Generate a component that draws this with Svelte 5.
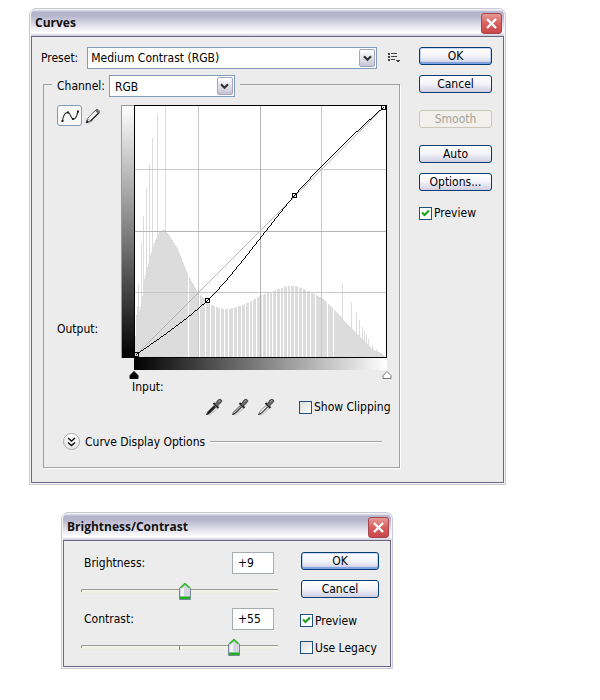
<script>
    let preset = "Medium Contrast (RGB)";
    let channel = "RGB";
    let curvePreview = true;
    let showClipping = false;
    let brightness = 9;
    let contrast = 55;
    let preview = true;
    let legacy = false;

    // outline of the histogram, x and top y in plot units
    const outline = [
        [1, 243], [3, 200], [5, 208], [8, 197], [10, 177], [16, 153], [21, 137], [26, 127],
        [30, 125], [34, 129], [43, 142], [53, 167], [58, 177], [64, 188], [76, 200], [86, 204],
        [94, 205], [103, 203], [116, 198], [126, 192], [139, 187], [153, 182], [163, 182],
        [176, 187], [189, 194], [203, 207], [216, 222], [229, 235], [239, 245], [248, 249], [252, 252],
    ];
    const spikes = [
        [4, 179], [7, 139], [9, 111], [12, 83], [15, 59], [18, 33], [23, 9], [31, 0],
        [209, 179], [218, 198], [223, 209], [226, 216], [229, 223], [231, 227], [233, 231], [235, 235],
        [239, 241], [243, 245],
    ];
    const gaps = [
        54, 65, 71, 76, 81, 86, 90, 94, 99, 103, 107, 111, 115, 118, 122, 126, 129, 133, 136, 139,
        143, 147, 150, 154, 157, 161, 165, 169, 173, 177, 182, 188, 194, 200,
    ];
    const points = [[2, 250], [73, 196], [161, 90], [250, 2]];
    const droppers = [
        { name: "black point", fill: "#111" },
        { name: "gray point", fill: "#aaa" },
        { name: "white point", fill: "#fff" },
    ];

    const shape = "M1 253L" + outline.map((p) => p.join(" ")).join("L") + "L252 253Z";

    function signed(n) {
        return n > 0 ? "+" + n : String(n);
    }

    function setBrightness(event) {
        brightness = Number(event.target.value) || 0;
    }

    function setContrast(event) {
        contrast = Number(event.target.value) || 0;
    }
</script>

<main>
    <section class="window curves">
        <header>
            <h2>Curves</h2>
            <button type="button" class="close" aria-label="Close Curves">
                <svg width="13" height="13" viewBox="0 0 13 13"><path d="M2 2l9 9M11 2l-9 9" stroke="#fff" stroke-width="2.4" /></svg>
            </button>
        </header>
        <div class="body">
            <div class="left">
                <div class="preset">
                    <label for="preset">Preset:</label>
                    <div class="combo wide">
                        <select id="preset" bind:value={preset}>
                            <option>Medium Contrast (RGB)</option>
                        </select>
                        <span class="arrow"><svg width="9" height="7" viewBox="0 0 9 7"><path d="M1 1.2l3.5 3.5L8 1.2" fill="none" stroke="#333" stroke-width="2.2" /></svg></span>
                    </div>
                    <button type="button" class="plain" aria-label="Preset options">
                        <svg width="12" height="12" viewBox="0 0 12 12" shape-rendering="crispEdges">
                            <path d="M0 1h2v2H0zM0 4h2v2H0zM0 7h2v2H0zM3 1h6v1H3zM3 4h6v1H3zM3 7h4v1H3zM8 8h4v1H8zM9 9h2v1H9z" fill="#444" />
                        </svg>
                    </button>
                </div>

                <fieldset>
                    <legend>
                        <label for="channel">Channel:</label>
                        <span class="combo channel">
                            <select id="channel" bind:value={channel}>
                                <option>RGB</option>
                                <option>Red</option>
                                <option>Green</option>
                                <option>Blue</option>
                            </select>
                            <span class="arrow"><svg width="9" height="7" viewBox="0 0 9 7"><path d="M1 1.2l3.5 3.5L8 1.2" fill="none" stroke="#333" stroke-width="2.2" /></svg></span>
                        </span>
                    </legend>

                    <div class="graph">
                        <div class="side">
                            <div class="tools">
                                <button type="button" class="tool" aria-label="Edit points">
                                    <svg width="20" height="16" viewBox="0 0 20 16">
                                        <path d="M2.500 13C3 8 5 4 8 4.500S10.500 11 13.500 11 17 7 18 3" fill="none" stroke="#333" stroke-width="1.200" />
                                        <path d="M1.500 12h2v2h-2zM7 3.500h2v2H7zM12 10h2v2h-2zM17 2.500h2v2h-2z" fill="#222" />
                                    </svg>
                                </button>
                                <button type="button" class="plain" aria-label="Draw curve">
                                    <svg width="16" height="16" viewBox="0 0 16 16">
                                        <path d="M3 15.500L8 12.500" stroke="#ccc" stroke-width="1.500" />
                                        <path d="M1 15l1.500-4.500L11 1.800q1-1 2.500.2T14.300 4.500L5.500 13z" fill="#f4f4f4" stroke="#555" stroke-width=".9" />
                                        <path d="M2.500 10.500l3 2.500" fill="none" stroke="#777" stroke-width=".8" />
                                        <path d="M5.500 13L14.300 4.500" stroke="#222" stroke-width="1.200" />
                                        <path d="M1 15l1-3 2 2z" fill="#111" />
                                        <path d="M11 1.800q2-1.300 3.300 2.700L13 5.500l-3-2.700z" fill="#666" />
                                    </svg>
                                </button>
                            </div>
                            <span>Output:</span>
                        </div>
                        <div class="ramp-v"></div>
                        <div class="plot">
                            <svg viewBox="0 0 254 254" shape-rendering="crispEdges" role="img" aria-label="Curve">
                                <rect width="254" height="254" fill="#fff" />
                                <path d={shape} fill="#dcdcdc" />
                                {#each spikes as [x, y]}
                                    <rect {x} {y} width="1" height={253 - y} fill="#dcdcdc" />
                                {/each}
                                {#each gaps as x}
                                    <rect {x} y="160" width="1" height="93" fill="#fff" />
                                {/each}
                                <path d="M64.500 0V253M188.500 0V253M0 64.500H253M0 188.500H253" stroke="#c8c8c8" />
                                <path d="M126.500 0V253M0 126.500H253" stroke="#b4b4b4" />
                                <path d="M2 251L251 2" stroke="#b4b4b4" />
                                <path d="M2.500 250.500C30 231 50 218 73.500 196.500S140 115 161.500 90.500 222 27 250.500 2.500" fill="none" stroke="#000" />
                                {#each points as [x, y]}
                                    <rect x={x - 1.5} y={y - 1.5} width="4" height="4" fill="none" stroke="#000" />
                                {/each}
                                <rect x="0.5" y="0.5" width="253" height="253" fill="none" stroke="#000" />
                            </svg>
                            <div class="ramp-h"></div>
                            <div class="markers">
                                <svg width="10" height="8" viewBox="0 0 10 8"><path d="M5 .5L9 4.500V7.500H1V4.500z" fill="#000" stroke="#000" /></svg>
                                <svg width="10" height="8" viewBox="0 0 10 8"><path d="M5 .5L9 4.500V7.500H1V4.500z" fill="#fff" stroke="#777" /></svg>
                            </div>
                            <span class="input-label">Input:</span>
                        </div>
                    </div>

                    <div class="picks">
                        {#each droppers as d}
                            <button type="button" class="plain" aria-label={"Set " + d.name}>
                                <svg width="18" height="18" viewBox="0 0 18 18">
                                    <path d="M4 17L12 10.500" stroke="#ccc" stroke-width="2" />
                                    <path d="M1.500 16.500L2.500 14 9 7.500l1.500 1.500L4 15.500z" fill={d.fill} stroke="#555" stroke-width=".7" />
                                    <path d="M1.500 16.500L4 15.500 10.500 9" fill="none" stroke="#111" />
                                    <path d="M8.500 5l5 5" stroke="#222" stroke-width="2" />
                                    <path d="M10 6.500L13 2q2.500-1.500 3.500 0T15.500 5L12 8.500z" fill="#666" stroke="#333" stroke-width=".8" />
                                    <path d="M13.500 3.500l1.500-1" stroke="#bbb" />
                                </svg>
                            </button>
                        {/each}
                        <label class="check clip"><input type="checkbox" bind:checked={showClipping} />Show Clipping</label>
                    </div>

                    <div class="more">
                        <button type="button" class="round" aria-label="Expand Curve Display Options">
                            <svg width="9" height="10" viewBox="0 0 9 10"><path d="M1 1l3.500 3L8 1M1 5.500l3.500 3L8 5.500" fill="none" stroke="#111" stroke-width="1.500" /></svg>
                        </button>
                        <span>Curve Display Options</span>
                        <hr />
                    </div>
                </fieldset>
            </div>

            <div class="actions">
                <button type="button" class="btn default">OK</button>
                <button type="button" class="btn">Cancel</button>
                <button type="button" class="btn spaced" disabled>Smooth</button>
                <button type="button" class="btn spaced">Auto</button>
                <button type="button" class="btn">Options...</button>
                <label class="check"><input type="checkbox" bind:checked={curvePreview} />Preview</label>
            </div>
        </div>
    </section>

    <section class="window brightness">
        <header>
            <h2>Brightness/Contrast</h2>
            <button type="button" class="close" aria-label="Close Brightness/Contrast">
                <svg width="13" height="13" viewBox="0 0 13 13"><path d="M2 2l9 9M11 2l-9 9" stroke="#fff" stroke-width="2.4" /></svg>
            </button>
        </header>
        <div class="body">
            <div class="sliders">
                <div class="field">
                    <label for="brightness">Brightness:</label>
                    <input id="brightness" type="text" value={signed(brightness)} on:change={setBrightness} />
                </div>
                <input type="range" aria-label="Brightness" min="-150" max="150" bind:value={brightness} />
                <div class="field">
                    <label for="contrast">Contrast:</label>
                    <input id="contrast" type="text" value={signed(contrast)} on:change={setContrast} />
                </div>
                <input type="range" class="ticked" aria-label="Contrast" min="-100" max="100" bind:value={contrast} />
            </div>
            <div class="actions">
                <button type="button" class="btn default">OK</button>
                <button type="button" class="btn">Cancel</button>
                <div class="checks">
                    <label class="check"><input type="checkbox" bind:checked={preview} />Preview</label>
                    <label class="check"><input type="checkbox" bind:checked={legacy} />Use Legacy</label>
                </div>
            </div>
        </div>
    </section>
</main>

<style>
    :global(body) {
        background: #fff;
    }
    main {
        padding: 8px 94px 8px 29px;
        font: 12px/16px "DejaVu Sans Condensed", "Noto Sans", sans-serif;
        color: #000;
    }
    main * {
        box-sizing: border-box;
    }
    button, input, select {
        font: inherit;
        color: inherit;
        margin: 0;
    }
    svg {
        display: block;
    }

    .window {
        border: 1px solid #c9c8d6;
        border-radius: 7px 7px 0 0;
        background: #f4f3fa;
        padding: 0 1px 1px;
    }
    .brightness {
        margin: 27px 113px 0 32px;
    }
    header {
        display: flex;
        align-items: center;
        justify-content: space-between;
        height: 27px;
        padding: 1px 2px 0 4px;
        border-radius: 6px 6px 0 0;
        background: linear-gradient(#fff 0, #b4b3cc 3px, #b6b5cd 7px, #d6d5e3 14px, #f4f4f8 21px, #fff 24px, #c6c5d4 27px);
    }
    h2 {
        margin: 0;
        font: bold 12px/16px "Open Sans", "Noto Sans", sans-serif;
        color: #111;
    }
    .close {
        display: grid;
        place-items: center;
        width: 21px;
        height: 21px;
        padding: 0;
        border: 1px solid #a8454c;
        border-radius: 3px;
        background: linear-gradient(#e59a96, #d9605c 50%, #c9474a);
    }
    .body {
        display: flex;
        border: 1px solid #6a6785;
        background: #ececec;
    }
    .plain {
        padding: 0;
        border: 0;
        background: none;
    }

    .curves .body {
        gap: 19px;
        padding: 10px 11px 14px 9px;
    }
    .left {
        flex: 1;
        min-width: 0;
    }
    .preset {
        display: flex;
        align-items: center;
        gap: 9px;
    }
    .preset .plain {
        margin-left: 2px;
    }
    .combo {
        position: relative;
        display: flex;
        height: 22px;
    }
    .wide {
        flex: 1;
    }
    .channel {
        width: 126px;
    }
    select {
        width: 100%;
        height: 22px;
        padding: 0 20px 0 3px;
        border: 1px solid #7f9db9;
        border-radius: 0;
        background: #fff;
        appearance: none;
    }
    .channel select {
        padding-left: 5px;
    }
    .arrow {
        position: absolute;
        top: 2px;
        right: 2px;
        display: grid;
        place-items: center;
        width: 16px;
        height: 18px;
        border: 1px solid #a5a5bd;
        border-radius: 2px;
        background: linear-gradient(#fff, #dcdce8 60%, #c3c3d6);
        pointer-events: none;
    }

    fieldset {
        min-width: 0;
        margin: 6px 0 0 2px;
        padding: 12px 12px 17px 13px;
        border: 1px solid #a0a0a4;
        box-shadow: 1px 1px 0 #fff;
    }
    legend {
        display: flex;
        align-items: flex-start;
        gap: 4px;
        height: 18px;
        margin-left: -5px;
        padding: 0 5px;
        line-height: 22px;
    }
    .graph {
        display: grid;
        grid-template-columns: 64px 13px 1fr;
    }
    .side {
        display: flex;
        flex-direction: column;
        justify-content: space-between;
        padding-bottom: 58px;
    }
    .tools {
        display: flex;
        align-items: center;
        gap: 3px;
    }
    .tool {
        display: grid;
        place-items: center;
        width: 25px;
        height: 21px;
        padding: 0;
        border: 1px solid #7f9db9;
        border-radius: 3px;
        background: #f8f8f8;
    }
    .ramp-v {
        margin-bottom: 37px;
        border: 1px solid #999;
        border-width: 1px 0 0 1px;
        background: linear-gradient(#fff, #000);
    }
    .plot > svg {
        width: 100%;
    }
    .ramp-h {
        height: 12px;
        background: linear-gradient(to right, #000, #fff);
    }
    .markers {
        display: flex;
        justify-content: space-between;
        margin: 1px -5px 0;
    }
    .input-label {
        display: block;
        margin-left: -2px;
    }

    .picks {
        display: flex;
        align-items: center;
        gap: 8px;
        height: 20px;
        margin-top: 2px;
        padding-left: 148px;
    }
    .check {
        display: flex;
        align-items: center;
        gap: 2px;
        white-space: nowrap;
    }
    .clip {
        margin-left: 16px;
    }
    .check input {
        flex: none;
        width: 13px;
        height: 13px;
        border: 1px solid #1c5180;
        background: linear-gradient(135deg, #dcdcd7, #fff);
        appearance: none;
    }
    .check input:checked {
        background: url("data:image/svg+xml,%3Csvg xmlns='http://www.w3.org/2000/svg' viewBox='0 0 11 11'%3E%3Cpath d='M2 4.500l2.500 2.500L9 2.500' fill='none' stroke='%2321a121' stroke-width='2.200'/%3E%3C/svg%3E"), #fff;
    }
    .more {
        display: flex;
        align-items: center;
        gap: 5px;
        margin: 16px 5px 0 6px;
    }
    .round {
        display: grid;
        place-items: center;
        width: 17px;
        height: 17px;
        padding: 0;
        border: 1px solid #aaa;
        border-radius: 50%;
        background: linear-gradient(#fff, #e4e4e4);
    }
    hr {
        flex: 1;
        height: 2px;
        margin: 0;
        border: 0;
        border-top: 1px solid #a0a0a4;
        background: #fff;
    }

    .actions {
        display: flex;
        flex-direction: column;
        gap: 10px;
        width: 73px;
    }
    .btn {
        height: 18px;
        padding: 0;
        border: 1px solid #003c74;
        border-radius: 3px;
        background: linear-gradient(#fff, #f3f3f9 50%, #cfcfe2);
        line-height: 14px;
    }
    .default {
        box-shadow: inset 0 -2px 1px #7d9fe0, inset 0 0 0 1px #c5d6f5;
    }
    .btn:disabled {
        border-color: #c9c7ba;
        background: #f1f0ec;
        color: #a5a397;
    }
    .spaced {
        margin-top: 7px;
    }
    .actions > .check {
        height: 24px;
    }

    .brightness .body {
        gap: 17px;
        padding: 11px 11px 10px;
    }
    .brightness .actions {
        width: 78px;
    }
    .checks {
        display: grid;
        gap: 10px;
        margin: 4px 0 0 -1px;
    }
    .checks .check {
        height: 17px;
    }
    .sliders {
        flex: 1;
        min-width: 0;
    }
    .field {
        display: flex;
        align-items: center;
        justify-content: space-between;
        padding: 0 10px 0 9px;
    }
    .field input {
        width: 42px;
        height: 22px;
        padding: 0 5px;
        border: 1px solid #a5acb2;
        background: #fff;
    }
    input[type="range"] {
        display: block;
        width: 100%;
        height: 18px;
        margin: 8px 0;
        /* the groove ends at the middle of the thumb's travel */
        background:
            linear-gradient(#9d9c91, #9d9c91) 6px 7px / calc(100% - 12px) 1px no-repeat,
            linear-gradient(#9d9c91, #9d9c91) 6px 7px / 1px 3px no-repeat,
            linear-gradient(#f3f2e8, #f3f2e8) 6px 8px / calc(100% - 12px) 3px no-repeat;
        appearance: none;
    }
    input.ticked {
        margin-bottom: 0;
        background:
            linear-gradient(#888, #888) 50% 8px / 1px 4px no-repeat,
            linear-gradient(#9d9c91, #9d9c91) 6px 7px / calc(100% - 12px) 1px no-repeat,
            linear-gradient(#9d9c91, #9d9c91) 6px 7px / 1px 3px no-repeat,
            linear-gradient(#f3f2e8, #f3f2e8) 6px 8px / calc(100% - 12px) 3px no-repeat;
    }
    input[type="range"]::-webkit-slider-thumb {
        width: 12px;
        height: 18px;
        background: url("data:image/svg+xml,%3Csvg xmlns='http://www.w3.org/2000/svg' viewBox='0 0 12 18'%3E%3Cpath d='M6 1L11.500 6V17.500H.5V6z' fill='%23d6d6e2' stroke='%23778899'/%3E%3Cpath d='M2 7v7h3V5z' fill='%23f6f6fc'/%3E%3Cpath d='M1.500 6L6 1.800 10.500 6' fill='none' stroke='%2335c22f' stroke-width='1.600'/%3E%3Cpath d='M1 14.500h10V17H1z' fill='%2321b021'/%3E%3C/svg%3E");
        appearance: none;
    }
</style>
